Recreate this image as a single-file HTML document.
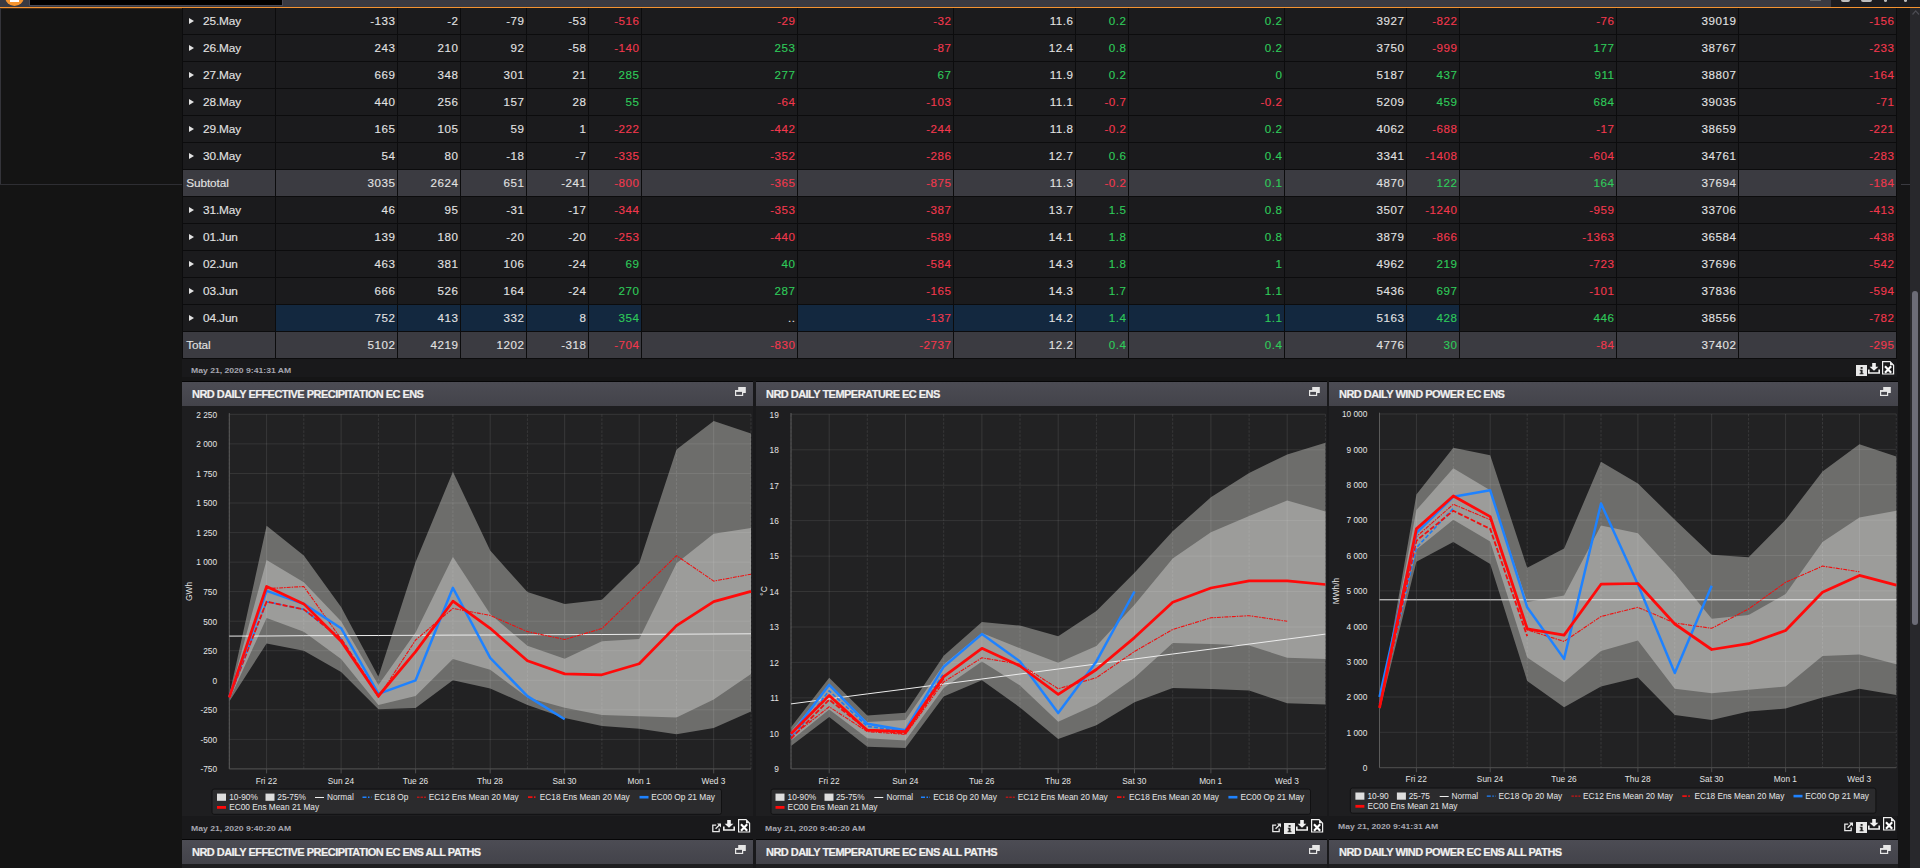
<!DOCTYPE html><html><head><meta charset="utf-8"><title>NRD</title><style>

html,body{margin:0;padding:0;background:#141414;}
body{width:1920px;height:868px;overflow:hidden;position:relative;font-family:"Liberation Sans",sans-serif;color:#dedede;}
.abs{position:absolute;}
.cell{position:absolute;height:26px;line-height:25px;font-size:11.6px;letter-spacing:.55px;text-align:right;box-sizing:border-box;padding-right:1.45px;white-space:nowrap;overflow:hidden;background:#1b1b1d;color:#e2e2e2;-webkit-text-stroke:.12px;}
.cell.lab{line-height:27px;text-align:left;padding-left:20px;letter-spacing:-.1px;font-size:11.8px;}
.cell.tot{background:#3b3b41;}
.cell.lab.tot{padding-left:3.2px;}
.cell.sel{background:#13283f;}
.r{color:#f2384d !important;}
.g{color:#2fcb5a !important;}
.tri{position:absolute;left:6px;top:9.6px;width:0;height:0;border-left:5px solid #e2e2e2;border-top:3px solid transparent;border-bottom:3px solid transparent;}
.ts{position:absolute;font-size:7px;font-weight:bold;letter-spacing:0;color:#a6a6b0;white-space:nowrap;line-height:10px;transform-origin:0 50%;transform:scaleX(1.23);}
.ptitle{position:absolute;height:24px;background:linear-gradient(#4c4c54,#43434a);}
.ptitle span{position:absolute;left:10px;top:0;line-height:25px;font-size:11px;font-weight:bold;color:#f0f0f0;white-space:nowrap;letter-spacing:-.53px;-webkit-text-stroke:.2px #f0f0f0;}
svg{position:absolute;left:0;top:0;}
svg text{font-family:"Liberation Sans",sans-serif;}

</style></head><body>
<div class="abs" style="left:0;top:0;width:1920px;height:7px;background:#3a3a42;"></div>
<div class="abs" style="left:29px;top:0;width:254px;height:6px;background:#4a4a55;"></div>
<div class="abs" style="left:30px;top:0;width:252px;height:5px;background:#000;"></div>
<div class="abs" style="left:5px;top:-13px;width:19px;height:19px;border-radius:50%;background:#f7952f;"></div>
<div class="abs" style="left:10px;top:0;width:9px;height:2px;background:#fff;"></div>
<div class="abs" style="left:1831px;top:0;width:89px;height:7px;background:#1c1c20;"></div>
<div class="abs" style="left:1810px;top:0;width:11px;height:1px;background:#6a6a6a;"></div>
<div class="abs" style="left:1841px;top:0;width:9px;height:2px;background:#bdbdbd;border-radius:0 0 2px 2px;"></div>
<div class="abs" style="left:1861px;top:0;width:11px;height:2px;background:#bdbdbd;border-radius:0 0 2px 2px;"></div>
<div class="abs" style="left:1884px;top:0;width:3px;height:2px;background:#bdbdbd;border-radius:0 0 2px 2px;"></div>
<div class="abs" style="left:1904px;top:0;width:3px;height:2px;background:#bdbdbd;border-radius:0 0 2px 2px;"></div>
<div class="abs" style="left:0;top:7px;width:1920px;height:1px;background:#f59331;"></div>
<div class="abs" style="left:0;top:8px;width:1920px;height:1px;background:rgba(245,147,49,.22);"></div>
<div class="abs" style="left:0;top:8px;width:1px;height:177px;background:#34343a;"></div>
<div class="abs" style="left:0;top:184px;width:1910px;height:1px;background:#2e2e33;"></div>
<div class="abs" style="left:182px;top:8px;width:1716px;height:860px;background:#19191b;"></div>
<div class="abs" style="left:1897px;top:8px;width:13px;height:860px;background:#151516;"></div>
<div class="abs" style="left:1901px;top:184px;width:9px;height:1px;background:#3a3a40;"></div>
<div class="abs" style="left:1909.5px;top:8px;width:10.5px;height:860px;background:#28282c;"></div>
<div class="abs" style="left:1912px;top:291px;width:6px;height:334px;border-radius:3px;background:#6c6c77;"></div>
<svg width="1920" height="30" style="left:0;top:0"><path d="M1912.5 14.5 L1915.7 10.8 L1919 14.5" fill="none" stroke="#4c4c53" stroke-width="1.2"/></svg>
<div class="abs" style="left:182px;top:8px;width:1715px;height:351px;background:#0c0c0d;"></div>
<div class="cell lab" style="left:183px;top:8px;width:92px"><i class="tri"></i>25.May</div>
<div class="cell" style="left:276px;top:8px;width:121px">-133</div>
<div class="cell" style="left:398px;top:8px;width:62px">-2</div>
<div class="cell" style="left:461px;top:8px;width:65px">-79</div>
<div class="cell" style="left:527px;top:8px;width:61px">-53</div>
<div class="cell r" style="left:589px;top:8px;width:52px">-516</div>
<div class="cell r" style="left:642px;top:8px;width:155px">-29</div>
<div class="cell r" style="left:798px;top:8px;width:155px">-32</div>
<div class="cell" style="left:954px;top:8px;width:121px">11.6</div>
<div class="cell g" style="left:1076px;top:8px;width:52px">0.2</div>
<div class="cell g" style="left:1129px;top:8px;width:155px">0.2</div>
<div class="cell" style="left:1285px;top:8px;width:121px">3927</div>
<div class="cell r" style="left:1407px;top:8px;width:52px">-822</div>
<div class="cell r" style="left:1460px;top:8px;width:156px">-76</div>
<div class="cell" style="left:1617px;top:8px;width:121px">39019</div>
<div class="cell r" style="left:1739px;top:8px;width:157px">-156</div>
<div class="cell lab" style="left:183px;top:35px;width:92px"><i class="tri"></i>26.May</div>
<div class="cell" style="left:276px;top:35px;width:121px">243</div>
<div class="cell" style="left:398px;top:35px;width:62px">210</div>
<div class="cell" style="left:461px;top:35px;width:65px">92</div>
<div class="cell" style="left:527px;top:35px;width:61px">-58</div>
<div class="cell r" style="left:589px;top:35px;width:52px">-140</div>
<div class="cell g" style="left:642px;top:35px;width:155px">253</div>
<div class="cell r" style="left:798px;top:35px;width:155px">-87</div>
<div class="cell" style="left:954px;top:35px;width:121px">12.4</div>
<div class="cell g" style="left:1076px;top:35px;width:52px">0.8</div>
<div class="cell g" style="left:1129px;top:35px;width:155px">0.2</div>
<div class="cell" style="left:1285px;top:35px;width:121px">3750</div>
<div class="cell r" style="left:1407px;top:35px;width:52px">-999</div>
<div class="cell g" style="left:1460px;top:35px;width:156px">177</div>
<div class="cell" style="left:1617px;top:35px;width:121px">38767</div>
<div class="cell r" style="left:1739px;top:35px;width:157px">-233</div>
<div class="cell lab" style="left:183px;top:62px;width:92px"><i class="tri"></i>27.May</div>
<div class="cell" style="left:276px;top:62px;width:121px">669</div>
<div class="cell" style="left:398px;top:62px;width:62px">348</div>
<div class="cell" style="left:461px;top:62px;width:65px">301</div>
<div class="cell" style="left:527px;top:62px;width:61px">21</div>
<div class="cell g" style="left:589px;top:62px;width:52px">285</div>
<div class="cell g" style="left:642px;top:62px;width:155px">277</div>
<div class="cell g" style="left:798px;top:62px;width:155px">67</div>
<div class="cell" style="left:954px;top:62px;width:121px">11.9</div>
<div class="cell g" style="left:1076px;top:62px;width:52px">0.2</div>
<div class="cell g" style="left:1129px;top:62px;width:155px">0</div>
<div class="cell" style="left:1285px;top:62px;width:121px">5187</div>
<div class="cell g" style="left:1407px;top:62px;width:52px">437</div>
<div class="cell g" style="left:1460px;top:62px;width:156px">911</div>
<div class="cell" style="left:1617px;top:62px;width:121px">38807</div>
<div class="cell r" style="left:1739px;top:62px;width:157px">-164</div>
<div class="cell lab" style="left:183px;top:89px;width:92px"><i class="tri"></i>28.May</div>
<div class="cell" style="left:276px;top:89px;width:121px">440</div>
<div class="cell" style="left:398px;top:89px;width:62px">256</div>
<div class="cell" style="left:461px;top:89px;width:65px">157</div>
<div class="cell" style="left:527px;top:89px;width:61px">28</div>
<div class="cell g" style="left:589px;top:89px;width:52px">55</div>
<div class="cell r" style="left:642px;top:89px;width:155px">-64</div>
<div class="cell r" style="left:798px;top:89px;width:155px">-103</div>
<div class="cell" style="left:954px;top:89px;width:121px">11.1</div>
<div class="cell r" style="left:1076px;top:89px;width:52px">-0.7</div>
<div class="cell r" style="left:1129px;top:89px;width:155px">-0.2</div>
<div class="cell" style="left:1285px;top:89px;width:121px">5209</div>
<div class="cell g" style="left:1407px;top:89px;width:52px">459</div>
<div class="cell g" style="left:1460px;top:89px;width:156px">684</div>
<div class="cell" style="left:1617px;top:89px;width:121px">39035</div>
<div class="cell r" style="left:1739px;top:89px;width:157px">-71</div>
<div class="cell lab" style="left:183px;top:116px;width:92px"><i class="tri"></i>29.May</div>
<div class="cell" style="left:276px;top:116px;width:121px">165</div>
<div class="cell" style="left:398px;top:116px;width:62px">105</div>
<div class="cell" style="left:461px;top:116px;width:65px">59</div>
<div class="cell" style="left:527px;top:116px;width:61px">1</div>
<div class="cell r" style="left:589px;top:116px;width:52px">-222</div>
<div class="cell r" style="left:642px;top:116px;width:155px">-442</div>
<div class="cell r" style="left:798px;top:116px;width:155px">-244</div>
<div class="cell" style="left:954px;top:116px;width:121px">11.8</div>
<div class="cell r" style="left:1076px;top:116px;width:52px">-0.2</div>
<div class="cell g" style="left:1129px;top:116px;width:155px">0.2</div>
<div class="cell" style="left:1285px;top:116px;width:121px">4062</div>
<div class="cell r" style="left:1407px;top:116px;width:52px">-688</div>
<div class="cell r" style="left:1460px;top:116px;width:156px">-17</div>
<div class="cell" style="left:1617px;top:116px;width:121px">38659</div>
<div class="cell r" style="left:1739px;top:116px;width:157px">-221</div>
<div class="cell lab" style="left:183px;top:143px;width:92px"><i class="tri"></i>30.May</div>
<div class="cell" style="left:276px;top:143px;width:121px">54</div>
<div class="cell" style="left:398px;top:143px;width:62px">80</div>
<div class="cell" style="left:461px;top:143px;width:65px">-18</div>
<div class="cell" style="left:527px;top:143px;width:61px">-7</div>
<div class="cell r" style="left:589px;top:143px;width:52px">-335</div>
<div class="cell r" style="left:642px;top:143px;width:155px">-352</div>
<div class="cell r" style="left:798px;top:143px;width:155px">-286</div>
<div class="cell" style="left:954px;top:143px;width:121px">12.7</div>
<div class="cell g" style="left:1076px;top:143px;width:52px">0.6</div>
<div class="cell g" style="left:1129px;top:143px;width:155px">0.4</div>
<div class="cell" style="left:1285px;top:143px;width:121px">3341</div>
<div class="cell r" style="left:1407px;top:143px;width:52px">-1408</div>
<div class="cell r" style="left:1460px;top:143px;width:156px">-604</div>
<div class="cell" style="left:1617px;top:143px;width:121px">34761</div>
<div class="cell r" style="left:1739px;top:143px;width:157px">-283</div>
<div class="cell lab tot" style="left:183px;top:170px;width:92px">Subtotal</div>
<div class="cell tot" style="left:276px;top:170px;width:121px">3035</div>
<div class="cell tot" style="left:398px;top:170px;width:62px">2624</div>
<div class="cell tot" style="left:461px;top:170px;width:65px">651</div>
<div class="cell tot" style="left:527px;top:170px;width:61px">-241</div>
<div class="cell tot r" style="left:589px;top:170px;width:52px">-800</div>
<div class="cell tot r" style="left:642px;top:170px;width:155px">-365</div>
<div class="cell tot r" style="left:798px;top:170px;width:155px">-875</div>
<div class="cell tot" style="left:954px;top:170px;width:121px">11.3</div>
<div class="cell tot r" style="left:1076px;top:170px;width:52px">-0.2</div>
<div class="cell tot g" style="left:1129px;top:170px;width:155px">0.1</div>
<div class="cell tot" style="left:1285px;top:170px;width:121px">4870</div>
<div class="cell tot g" style="left:1407px;top:170px;width:52px">122</div>
<div class="cell tot g" style="left:1460px;top:170px;width:156px">164</div>
<div class="cell tot" style="left:1617px;top:170px;width:121px">37694</div>
<div class="cell tot r" style="left:1739px;top:170px;width:157px">-184</div>
<div class="cell lab" style="left:183px;top:197px;width:92px"><i class="tri"></i>31.May</div>
<div class="cell" style="left:276px;top:197px;width:121px">46</div>
<div class="cell" style="left:398px;top:197px;width:62px">95</div>
<div class="cell" style="left:461px;top:197px;width:65px">-31</div>
<div class="cell" style="left:527px;top:197px;width:61px">-17</div>
<div class="cell r" style="left:589px;top:197px;width:52px">-344</div>
<div class="cell r" style="left:642px;top:197px;width:155px">-353</div>
<div class="cell r" style="left:798px;top:197px;width:155px">-387</div>
<div class="cell" style="left:954px;top:197px;width:121px">13.7</div>
<div class="cell g" style="left:1076px;top:197px;width:52px">1.5</div>
<div class="cell g" style="left:1129px;top:197px;width:155px">0.8</div>
<div class="cell" style="left:1285px;top:197px;width:121px">3507</div>
<div class="cell r" style="left:1407px;top:197px;width:52px">-1240</div>
<div class="cell r" style="left:1460px;top:197px;width:156px">-959</div>
<div class="cell" style="left:1617px;top:197px;width:121px">33706</div>
<div class="cell r" style="left:1739px;top:197px;width:157px">-413</div>
<div class="cell lab" style="left:183px;top:224px;width:92px"><i class="tri"></i>01.Jun</div>
<div class="cell" style="left:276px;top:224px;width:121px">139</div>
<div class="cell" style="left:398px;top:224px;width:62px">180</div>
<div class="cell" style="left:461px;top:224px;width:65px">-20</div>
<div class="cell" style="left:527px;top:224px;width:61px">-20</div>
<div class="cell r" style="left:589px;top:224px;width:52px">-253</div>
<div class="cell r" style="left:642px;top:224px;width:155px">-440</div>
<div class="cell r" style="left:798px;top:224px;width:155px">-589</div>
<div class="cell" style="left:954px;top:224px;width:121px">14.1</div>
<div class="cell g" style="left:1076px;top:224px;width:52px">1.8</div>
<div class="cell g" style="left:1129px;top:224px;width:155px">0.8</div>
<div class="cell" style="left:1285px;top:224px;width:121px">3879</div>
<div class="cell r" style="left:1407px;top:224px;width:52px">-866</div>
<div class="cell r" style="left:1460px;top:224px;width:156px">-1363</div>
<div class="cell" style="left:1617px;top:224px;width:121px">36584</div>
<div class="cell r" style="left:1739px;top:224px;width:157px">-438</div>
<div class="cell lab" style="left:183px;top:251px;width:92px"><i class="tri"></i>02.Jun</div>
<div class="cell" style="left:276px;top:251px;width:121px">463</div>
<div class="cell" style="left:398px;top:251px;width:62px">381</div>
<div class="cell" style="left:461px;top:251px;width:65px">106</div>
<div class="cell" style="left:527px;top:251px;width:61px">-24</div>
<div class="cell g" style="left:589px;top:251px;width:52px">69</div>
<div class="cell g" style="left:642px;top:251px;width:155px">40</div>
<div class="cell r" style="left:798px;top:251px;width:155px">-584</div>
<div class="cell" style="left:954px;top:251px;width:121px">14.3</div>
<div class="cell g" style="left:1076px;top:251px;width:52px">1.8</div>
<div class="cell g" style="left:1129px;top:251px;width:155px">1</div>
<div class="cell" style="left:1285px;top:251px;width:121px">4962</div>
<div class="cell g" style="left:1407px;top:251px;width:52px">219</div>
<div class="cell r" style="left:1460px;top:251px;width:156px">-723</div>
<div class="cell" style="left:1617px;top:251px;width:121px">37696</div>
<div class="cell r" style="left:1739px;top:251px;width:157px">-542</div>
<div class="cell lab" style="left:183px;top:278px;width:92px"><i class="tri"></i>03.Jun</div>
<div class="cell" style="left:276px;top:278px;width:121px">666</div>
<div class="cell" style="left:398px;top:278px;width:62px">526</div>
<div class="cell" style="left:461px;top:278px;width:65px">164</div>
<div class="cell" style="left:527px;top:278px;width:61px">-24</div>
<div class="cell g" style="left:589px;top:278px;width:52px">270</div>
<div class="cell g" style="left:642px;top:278px;width:155px">287</div>
<div class="cell r" style="left:798px;top:278px;width:155px">-165</div>
<div class="cell" style="left:954px;top:278px;width:121px">14.3</div>
<div class="cell g" style="left:1076px;top:278px;width:52px">1.7</div>
<div class="cell g" style="left:1129px;top:278px;width:155px">1.1</div>
<div class="cell" style="left:1285px;top:278px;width:121px">5436</div>
<div class="cell g" style="left:1407px;top:278px;width:52px">697</div>
<div class="cell r" style="left:1460px;top:278px;width:156px">-101</div>
<div class="cell" style="left:1617px;top:278px;width:121px">37836</div>
<div class="cell r" style="left:1739px;top:278px;width:157px">-594</div>
<div class="cell lab" style="left:183px;top:305px;width:92px"><i class="tri"></i>04.Jun</div>
<div class="cell sel" style="left:276px;top:305px;width:121px">752</div>
<div class="cell sel" style="left:398px;top:305px;width:62px">413</div>
<div class="cell sel" style="left:461px;top:305px;width:65px">332</div>
<div class="cell sel" style="left:527px;top:305px;width:61px">8</div>
<div class="cell sel g" style="left:589px;top:305px;width:52px">354</div>
<div class="cell" style="left:642px;top:305px;width:155px">..</div>
<div class="cell sel r" style="left:798px;top:305px;width:155px">-137</div>
<div class="cell sel" style="left:954px;top:305px;width:121px">14.2</div>
<div class="cell sel g" style="left:1076px;top:305px;width:52px">1.4</div>
<div class="cell sel g" style="left:1129px;top:305px;width:155px">1.1</div>
<div class="cell sel" style="left:1285px;top:305px;width:121px">5163</div>
<div class="cell sel g" style="left:1407px;top:305px;width:52px">428</div>
<div class="cell g" style="left:1460px;top:305px;width:156px">446</div>
<div class="cell" style="left:1617px;top:305px;width:121px">38556</div>
<div class="cell r" style="left:1739px;top:305px;width:157px">-782</div>
<div class="cell lab tot" style="left:183px;top:332px;width:92px">Total</div>
<div class="cell tot" style="left:276px;top:332px;width:121px">5102</div>
<div class="cell tot" style="left:398px;top:332px;width:62px">4219</div>
<div class="cell tot" style="left:461px;top:332px;width:65px">1202</div>
<div class="cell tot" style="left:527px;top:332px;width:61px">-318</div>
<div class="cell tot r" style="left:589px;top:332px;width:52px">-704</div>
<div class="cell tot r" style="left:642px;top:332px;width:155px">-830</div>
<div class="cell tot r" style="left:798px;top:332px;width:155px">-2737</div>
<div class="cell tot" style="left:954px;top:332px;width:121px">12.2</div>
<div class="cell tot g" style="left:1076px;top:332px;width:52px">0.4</div>
<div class="cell tot g" style="left:1129px;top:332px;width:155px">0.4</div>
<div class="cell tot" style="left:1285px;top:332px;width:121px">4776</div>
<div class="cell tot g" style="left:1407px;top:332px;width:52px">30</div>
<div class="cell tot r" style="left:1460px;top:332px;width:156px">-84</div>
<div class="cell tot" style="left:1617px;top:332px;width:121px">37402</div>
<div class="cell tot r" style="left:1739px;top:332px;width:157px">-295</div>
<div class="ts" style="left:190.5px;top:365.5px">May 21, 2020 9:41:31 AM</div>
<svg width="11" height="11" style="left:1855.5px;top:364.5px;overflow:visible"><rect x="0" y="0" width="11" height="11" fill="#e8e8e8"/><rect x="4.6" y="2" width="2" height="1.8" fill="#222"/><path d="M3.8 4.8 H6.6 V8.3 H7.5 V9.3 H3.6 V8.3 H4.6 V5.8 H3.8 Z" fill="#222"/></svg>
<svg width="12" height="12" style="left:1867.5px;top:362.5px;overflow:visible"><path d="M4.2 0 H7.8 V3.8 H10.4 L6 7.8 L1.6 3.8 H4.2 Z" fill="#f0f0f0"/><path d="M0 6.4 H1.6 V9.2 H10.4 V6.4 H12 V10.8 H0 Z" fill="#f0f0f0"/></svg>
<svg width="12" height="14" style="left:1882.2px;top:361.3px;overflow:visible"><path d="M0.6 0.6 H8 L11.6 4.2 V13 H0.6 Z" fill="none" stroke="#f0f0f0" stroke-width="1.2"/><path d="M8 0.6 V4.2 H11.6 Z" fill="#f0f0f0" stroke="none"/><path d="M3 5.2 L9.2 11.8 M9.2 5.2 L3 11.8" stroke="#ffffff" stroke-width="2.1" fill="none"/></svg>
<div class="abs" style="left:182px;top:377px;width:1716px;height:4px;background:#151516;"></div>
<div class="abs" style="left:182px;top:381px;width:571px;height:1px;background:#060607;"></div>
<div class="ptitle" style="left:182px;top:382px;width:571px"><span>NRD DAILY EFFECTIVE PRECIPITATION EC ENS</span></div>
<svg width="11" height="9" style="left:735.1px;top:387px;overflow:visible"><rect x="3.2" y="0" width="7.6" height="6" fill="#e6e6e6"/><rect x="0.6" y="3.8" width="7" height="4.6" fill="#45454c" stroke="#e6e6e6" stroke-width="1.2"/><rect x="0" y="3.2" width="8.2" height="1.6" fill="#e6e6e6"/></svg>
<div class="abs" style="left:182px;top:406px;width:571px;height:410px;background:#1e1e20;"></div>
<div class="ts" style="left:190.7px;top:823.5px">May 21, 2020 9:40:20 AM</div>
<div class="abs" style="left:182px;top:839px;width:571px;height:1px;background:#060607;"></div>
<div class="ptitle" style="left:182px;top:840px;width:571px"><span>NRD DAILY EFFECTIVE PRECIPITATION EC ENS ALL PATHS</span></div>
<svg width="11" height="9" style="left:735.1px;top:845px;overflow:visible"><rect x="3.2" y="0" width="7.6" height="6" fill="#e6e6e6"/><rect x="0.6" y="3.8" width="7" height="4.6" fill="#45454c" stroke="#e6e6e6" stroke-width="1.2"/><rect x="0" y="3.2" width="8.2" height="1.6" fill="#e6e6e6"/></svg>
<div class="abs" style="left:182px;top:864px;width:571px;height:4px;background:#1e1e20;"></div>
<svg width="12" height="14" style="left:737.7px;top:818.6px;overflow:visible"><path d="M0.6 0.6 H8 L11.6 4.2 V13 H0.6 Z" fill="none" stroke="#f0f0f0" stroke-width="1.2"/><path d="M8 0.6 V4.2 H11.6 Z" fill="#f0f0f0" stroke="none"/><path d="M3 5.2 L9.2 11.8 M9.2 5.2 L3 11.8" stroke="#ffffff" stroke-width="2.1" fill="none"/></svg>
<svg width="12" height="12" style="left:722.9000000000001px;top:819.9px;overflow:visible"><path d="M4.2 0 H7.8 V3.8 H10.4 L6 7.8 L1.6 3.8 H4.2 Z" fill="#f0f0f0"/><path d="M0 6.4 H1.6 V9.2 H10.4 V6.4 H12 V10.8 H0 Z" fill="#f0f0f0"/></svg>
<svg width="9" height="9" style="left:711.7px;top:823.0px;overflow:visible"><g fill="none" stroke="#e8e8e8" stroke-width="1.3"><path d="M4.2 2.2 H0.8 V8.6 H7.2 V5.4"/><path d="M3.6 5.8 L8.2 1.2"/></g><path d="M5 0.4 H9 V4.4 Z" fill="#e8e8e8"/></svg>
<div class="abs" style="left:756px;top:381px;width:571px;height:1px;background:#060607;"></div>
<div class="ptitle" style="left:756px;top:382px;width:571px"><span>NRD DAILY TEMPERATURE EC ENS</span></div>
<svg width="11" height="9" style="left:1309.1px;top:387px;overflow:visible"><rect x="3.2" y="0" width="7.6" height="6" fill="#e6e6e6"/><rect x="0.6" y="3.8" width="7" height="4.6" fill="#45454c" stroke="#e6e6e6" stroke-width="1.2"/><rect x="0" y="3.2" width="8.2" height="1.6" fill="#e6e6e6"/></svg>
<div class="abs" style="left:756px;top:406px;width:571px;height:410px;background:#1e1e20;"></div>
<div class="ts" style="left:764.7px;top:823.5px">May 21, 2020 9:40:20 AM</div>
<div class="abs" style="left:756px;top:839px;width:571px;height:1px;background:#060607;"></div>
<div class="ptitle" style="left:756px;top:840px;width:571px"><span>NRD DAILY TEMPERATURE EC ENS ALL PATHS</span></div>
<svg width="11" height="9" style="left:1309.1px;top:845px;overflow:visible"><rect x="3.2" y="0" width="7.6" height="6" fill="#e6e6e6"/><rect x="0.6" y="3.8" width="7" height="4.6" fill="#45454c" stroke="#e6e6e6" stroke-width="1.2"/><rect x="0" y="3.2" width="8.2" height="1.6" fill="#e6e6e6"/></svg>
<div class="abs" style="left:756px;top:864px;width:571px;height:4px;background:#1e1e20;"></div>
<svg width="12" height="14" style="left:1310.6px;top:818.6px;overflow:visible"><path d="M0.6 0.6 H8 L11.6 4.2 V13 H0.6 Z" fill="none" stroke="#f0f0f0" stroke-width="1.2"/><path d="M8 0.6 V4.2 H11.6 Z" fill="#f0f0f0" stroke="none"/><path d="M3 5.2 L9.2 11.8 M9.2 5.2 L3 11.8" stroke="#ffffff" stroke-width="2.1" fill="none"/></svg>
<svg width="12" height="12" style="left:1295.8px;top:819.9px;overflow:visible"><path d="M4.2 0 H7.8 V3.8 H10.4 L6 7.8 L1.6 3.8 H4.2 Z" fill="#f0f0f0"/><path d="M0 6.4 H1.6 V9.2 H10.4 V6.4 H12 V10.8 H0 Z" fill="#f0f0f0"/></svg>
<svg width="11" height="11" style="left:1283.6999999999998px;top:823.0px;overflow:visible"><rect x="0" y="0" width="11" height="11" fill="#e8e8e8"/><rect x="4.6" y="2" width="2" height="1.8" fill="#222"/><path d="M3.8 4.8 H6.6 V8.3 H7.5 V9.3 H3.6 V8.3 H4.6 V5.8 H3.8 Z" fill="#222"/></svg>
<svg width="9" height="9" style="left:1272.3px;top:823.0px;overflow:visible"><g fill="none" stroke="#e8e8e8" stroke-width="1.3"><path d="M4.2 2.2 H0.8 V8.6 H7.2 V5.4"/><path d="M3.6 5.8 L8.2 1.2"/></g><path d="M5 0.4 H9 V4.4 Z" fill="#e8e8e8"/></svg>
<div class="abs" style="left:1329px;top:381px;width:569px;height:1px;background:#060607;"></div>
<div class="ptitle" style="left:1329px;top:382px;width:569px"><span>NRD DAILY WIND POWER EC ENS</span></div>
<svg width="11" height="9" style="left:1880.1px;top:387px;overflow:visible"><rect x="3.2" y="0" width="7.6" height="6" fill="#e6e6e6"/><rect x="0.6" y="3.8" width="7" height="4.6" fill="#45454c" stroke="#e6e6e6" stroke-width="1.2"/><rect x="0" y="3.2" width="8.2" height="1.6" fill="#e6e6e6"/></svg>
<div class="abs" style="left:1329px;top:406px;width:569px;height:410px;background:#1e1e20;"></div>
<div class="ts" style="left:1337.7px;top:821.5px">May 21, 2020 9:41:31 AM</div>
<div class="abs" style="left:1329px;top:839px;width:569px;height:1px;background:#060607;"></div>
<div class="ptitle" style="left:1329px;top:840px;width:569px"><span>NRD DAILY WIND POWER EC ENS ALL PATHS</span></div>
<svg width="11" height="9" style="left:1880.1px;top:845px;overflow:visible"><rect x="3.2" y="0" width="7.6" height="6" fill="#e6e6e6"/><rect x="0.6" y="3.8" width="7" height="4.6" fill="#45454c" stroke="#e6e6e6" stroke-width="1.2"/><rect x="0" y="3.2" width="8.2" height="1.6" fill="#e6e6e6"/></svg>
<div class="abs" style="left:1329px;top:864px;width:569px;height:4px;background:#1e1e20;"></div>
<svg width="12" height="14" style="left:1882.5px;top:817.4px;overflow:visible"><path d="M0.6 0.6 H8 L11.6 4.2 V13 H0.6 Z" fill="none" stroke="#f0f0f0" stroke-width="1.2"/><path d="M8 0.6 V4.2 H11.6 Z" fill="#f0f0f0" stroke="none"/><path d="M3 5.2 L9.2 11.8 M9.2 5.2 L3 11.8" stroke="#ffffff" stroke-width="2.1" fill="none"/></svg>
<svg width="12" height="12" style="left:1867.7px;top:818.6999999999999px;overflow:visible"><path d="M4.2 0 H7.8 V3.8 H10.4 L6 7.8 L1.6 3.8 H4.2 Z" fill="#f0f0f0"/><path d="M0 6.4 H1.6 V9.2 H10.4 V6.4 H12 V10.8 H0 Z" fill="#f0f0f0"/></svg>
<svg width="11" height="11" style="left:1855.6px;top:821.8px;overflow:visible"><rect x="0" y="0" width="11" height="11" fill="#e8e8e8"/><rect x="4.6" y="2" width="2" height="1.8" fill="#222"/><path d="M3.8 4.8 H6.6 V8.3 H7.5 V9.3 H3.6 V8.3 H4.6 V5.8 H3.8 Z" fill="#222"/></svg>
<svg width="9" height="9" style="left:1844.2px;top:821.8px;overflow:visible"><g fill="none" stroke="#e8e8e8" stroke-width="1.3"><path d="M4.2 2.2 H0.8 V8.6 H7.2 V5.4"/><path d="M3.6 5.8 L8.2 1.2"/></g><path d="M5 0.4 H9 V4.4 Z" fill="#e8e8e8"/></svg>
<svg width="1920" height="868" viewBox="0 0 1920 868"><rect x="229.3" y="413.09999999999997" width="521.7" height="355.8" fill="#222223"/><polygon points="229.3,695.0 266.6,525.8 303.8,555.6 341.1,607.0 378.4,676.7 415.6,562.1 452.9,471.7 490.2,550.5 527.4,592.1 564.7,603.9 601.9,599.7 639.2,563.3 676.5,449.5 713.7,421.0 751.0,433.4 751.0,711.5 713.7,728.1 676.5,734.3 639.2,728.8 601.9,725.9 564.7,718.0 527.4,704.9 490.2,688.5 452.9,680.3 415.6,708.0 378.4,709.2 341.1,672.0 303.8,650.7 266.6,643.4 229.3,701.5" fill="#6d6d6b"/><polygon points="229.3,696.8 266.6,560.1 303.8,582.2 341.1,621.2 378.4,685.0 415.6,632.5 452.9,556.7 490.2,614.1 527.4,645.8 564.7,658.8 601.9,641.3 639.2,639.0 676.5,563.3 713.7,533.7 751.0,528.1 751.0,674.1 713.7,699.5 676.5,717.5 639.2,716.2 601.9,714.9 564.7,707.8 527.4,697.4 490.2,669.8 452.9,659.0 415.6,696.1 378.4,704.9 341.1,659.0 303.8,631.8 266.6,618.0 229.3,700.1" fill="#9c9c9a"/><line x1="229.3" x2="751" y1="414.4" y2="414.4" stroke="rgba(255,255,255,.085)" stroke-width="1"/><line x1="229.3" x2="751" y1="443.9" y2="443.9" stroke="rgba(255,255,255,.085)" stroke-width="1"/><line x1="229.3" x2="751" y1="473.5" y2="473.5" stroke="rgba(255,255,255,.085)" stroke-width="1"/><line x1="229.3" x2="751" y1="503.0" y2="503.0" stroke="rgba(255,255,255,.085)" stroke-width="1"/><line x1="229.3" x2="751" y1="532.6" y2="532.6" stroke="rgba(255,255,255,.085)" stroke-width="1"/><line x1="229.3" x2="751" y1="562.1" y2="562.1" stroke="rgba(255,255,255,.085)" stroke-width="1"/><line x1="229.3" x2="751" y1="591.6" y2="591.6" stroke="rgba(255,255,255,.085)" stroke-width="1"/><line x1="229.3" x2="751" y1="621.2" y2="621.2" stroke="rgba(255,255,255,.085)" stroke-width="1"/><line x1="229.3" x2="751" y1="650.7" y2="650.7" stroke="rgba(255,255,255,.085)" stroke-width="1"/><line x1="229.3" x2="751" y1="680.3" y2="680.3" stroke="rgba(255,255,255,.085)" stroke-width="1"/><line x1="229.3" x2="751" y1="709.8" y2="709.8" stroke="rgba(255,255,255,.085)" stroke-width="1"/><line x1="229.3" x2="751" y1="739.4" y2="739.4" stroke="rgba(255,255,255,.085)" stroke-width="1"/><line x1="229.3" x2="751" y1="768.9" y2="768.9" stroke="rgba(255,255,255,.085)" stroke-width="1"/><line x1="229.3" x2="229.3" y1="414.4" y2="768.9" stroke="rgba(255,255,255,.10)" stroke-width="1" stroke-dasharray="2.5,1.5"/><line x1="266.6" x2="266.6" y1="414.4" y2="768.9" stroke="rgba(255,255,255,.10)" stroke-width="1"/><line x1="303.8" x2="303.8" y1="414.4" y2="768.9" stroke="rgba(255,255,255,.10)" stroke-width="1" stroke-dasharray="2.5,1.5"/><line x1="341.1" x2="341.1" y1="414.4" y2="768.9" stroke="rgba(255,255,255,.10)" stroke-width="1"/><line x1="378.4" x2="378.4" y1="414.4" y2="768.9" stroke="rgba(255,255,255,.10)" stroke-width="1" stroke-dasharray="2.5,1.5"/><line x1="415.6" x2="415.6" y1="414.4" y2="768.9" stroke="rgba(255,255,255,.10)" stroke-width="1"/><line x1="452.9" x2="452.9" y1="414.4" y2="768.9" stroke="rgba(255,255,255,.10)" stroke-width="1" stroke-dasharray="2.5,1.5"/><line x1="490.2" x2="490.2" y1="414.4" y2="768.9" stroke="rgba(255,255,255,.10)" stroke-width="1"/><line x1="527.4" x2="527.4" y1="414.4" y2="768.9" stroke="rgba(255,255,255,.10)" stroke-width="1" stroke-dasharray="2.5,1.5"/><line x1="564.7" x2="564.7" y1="414.4" y2="768.9" stroke="rgba(255,255,255,.10)" stroke-width="1"/><line x1="601.9" x2="601.9" y1="414.4" y2="768.9" stroke="rgba(255,255,255,.10)" stroke-width="1" stroke-dasharray="2.5,1.5"/><line x1="639.2" x2="639.2" y1="414.4" y2="768.9" stroke="rgba(255,255,255,.10)" stroke-width="1"/><line x1="676.5" x2="676.5" y1="414.4" y2="768.9" stroke="rgba(255,255,255,.10)" stroke-width="1" stroke-dasharray="2.5,1.5"/><line x1="713.7" x2="713.7" y1="414.4" y2="768.9" stroke="rgba(255,255,255,.10)" stroke-width="1"/><line x1="751.0" x2="751.0" y1="414.4" y2="768.9" stroke="rgba(255,255,255,.10)" stroke-width="1" stroke-dasharray="2.5,1.5"/><line x1="229.3" x2="229.3" y1="413.09999999999997" y2="768.9" stroke="#5a5a5a" stroke-width="1"/><line x1="229.3" x2="751" y1="768.9" y2="768.9" stroke="#4e4e4e" stroke-width="1"/><line x1="266.6" x2="266.6" y1="768.9" y2="773.4" stroke="#4e4e4e" stroke-width="1"/><line x1="341.1" x2="341.1" y1="768.9" y2="773.4" stroke="#4e4e4e" stroke-width="1"/><line x1="415.6" x2="415.6" y1="768.9" y2="773.4" stroke="#4e4e4e" stroke-width="1"/><line x1="490.2" x2="490.2" y1="768.9" y2="773.4" stroke="#4e4e4e" stroke-width="1"/><line x1="564.7" x2="564.7" y1="768.9" y2="773.4" stroke="#4e4e4e" stroke-width="1"/><line x1="639.2" x2="639.2" y1="768.9" y2="773.4" stroke="#4e4e4e" stroke-width="1"/><line x1="713.7" x2="713.7" y1="768.9" y2="773.4" stroke="#4e4e4e" stroke-width="1"/><polyline points="229.3,636.1 266.6,636.0 303.8,635.7 341.1,635.6 378.4,635.5 415.6,635.3 452.9,635.1 490.2,635.0 527.4,634.8 564.7,634.7 601.9,634.5 639.2,634.3 676.5,634.2 713.7,634.0 751.0,633.8" fill="none" stroke="#ececec" stroke-width="1.0" stroke-linejoin="round" stroke-opacity="1"/><polyline points="229.3,697.4 266.6,588.7 303.8,586.5 341.1,638.9 378.4,697.4 415.6,640.0 452.9,608.4 490.2,615.4 527.4,631.6 564.7,639.5 601.9,628.5 639.2,592.1 676.5,555.6 713.7,581.1 751.0,574.2" fill="none" stroke="#f01010" stroke-width="1.1" stroke-linejoin="round" stroke-opacity="1" stroke-dasharray="4,1,1.5,1"/><polyline points="229.3,697.4 266.6,601.7 303.8,609.4 341.1,638.9 378.4,695.6" fill="none" stroke="#1e7cf0" stroke-width="1.6" stroke-linejoin="round" stroke-opacity="1" stroke-dasharray="4,2"/><polyline points="229.3,697.4 266.6,601.7 303.8,609.4 341.1,638.9 378.4,695.6" fill="none" stroke="#f01010" stroke-width="1.8" stroke-linejoin="round" stroke-opacity="1" stroke-dasharray="5,2"/><polyline points="229.3,696.8 266.6,590.8 303.8,603.9 341.1,628.2 378.4,693.9 415.6,680.3 452.9,587.8 490.2,657.8 527.4,696.1 564.7,719.3" fill="none" stroke="#1e82ff" stroke-width="2.45" stroke-linejoin="round" stroke-opacity="1"/><polyline points="229.3,697.4 266.6,586.5 303.8,603.9 341.1,641.3 378.4,696.0 415.6,651.6 452.9,601.2 490.2,628.3 527.4,660.8 564.7,673.9 601.9,674.8 639.2,663.8 676.5,625.6 713.7,601.6 751.0,591.4" fill="none" stroke="#ff0a0a" stroke-width="2.75" stroke-linejoin="round" stroke-opacity="1"/><text x="217.10000000000002" y="417.7" font-size="8.3" fill="#e4e4e4" text-anchor="end">2 250</text><text x="217.10000000000002" y="447.2" font-size="8.3" fill="#e4e4e4" text-anchor="end">2 000</text><text x="217.10000000000002" y="476.8" font-size="8.3" fill="#e4e4e4" text-anchor="end">1 750</text><text x="217.10000000000002" y="506.3" font-size="8.3" fill="#e4e4e4" text-anchor="end">1 500</text><text x="217.10000000000002" y="535.9" font-size="8.3" fill="#e4e4e4" text-anchor="end">1 250</text><text x="217.10000000000002" y="565.4" font-size="8.3" fill="#e4e4e4" text-anchor="end">1 000</text><text x="217.10000000000002" y="594.9" font-size="8.3" fill="#e4e4e4" text-anchor="end">750</text><text x="217.10000000000002" y="624.5" font-size="8.3" fill="#e4e4e4" text-anchor="end">500</text><text x="217.10000000000002" y="654.0" font-size="8.3" fill="#e4e4e4" text-anchor="end">250</text><text x="217.10000000000002" y="683.6" font-size="8.3" fill="#e4e4e4" text-anchor="end">0</text><text x="217.10000000000002" y="713.1" font-size="8.3" fill="#e4e4e4" text-anchor="end">-250</text><text x="217.10000000000002" y="742.7" font-size="8.3" fill="#e4e4e4" text-anchor="end">-500</text><text x="217.10000000000002" y="772.2" font-size="8.3" fill="#e4e4e4" text-anchor="end">-750</text><text transform="translate(192.3,591.5) rotate(-90)" font-size="8.4" fill="#e4e4e4" text-anchor="middle">GWh</text><text x="266.4" y="784" font-size="8.3" fill="#e4e4e4" text-anchor="middle">Fri 22</text><text x="340.9" y="784" font-size="8.3" fill="#e4e4e4" text-anchor="middle">Sun 24</text><text x="415.4" y="784" font-size="8.3" fill="#e4e4e4" text-anchor="middle">Tue 26</text><text x="490.0" y="784" font-size="8.3" fill="#e4e4e4" text-anchor="middle">Thu 28</text><text x="564.5" y="784" font-size="8.3" fill="#e4e4e4" text-anchor="middle">Sat 30</text><text x="639.0" y="784" font-size="8.3" fill="#e4e4e4" text-anchor="middle">Mon 1</text><text x="713.5" y="784" font-size="8.3" fill="#e4e4e4" text-anchor="middle">Wed 3</text><rect x="212" y="789.1" width="509.5" height="25.2" rx="2" fill="#2b2b2d" stroke="#111112" stroke-width="1"/><rect x="217" y="793.6" width="9" height="7.2" fill="#dedede"/><text x="229.2" y="800.0" font-size="8.3" fill="#e6e6e6">10-90%</text><rect x="265.5" y="793.6" width="9" height="7.2" fill="#dedede"/><text x="277.3" y="800.0" font-size="8.3" fill="#e6e6e6">25-75%</text><line x1="315" x2="324" y1="797.5" y2="797.5" stroke="#eee" stroke-width="1"/><text x="327" y="800.0" font-size="8.3" fill="#e6e6e6">Normal</text><line x1="362.5" x2="371.5" y1="797.2" y2="797.2" stroke="#1e82ff" stroke-width="1.4" stroke-dasharray="4,1.5,1.5,1.5"/><text x="374.3" y="800.0" font-size="8.3" fill="#e6e6e6">EC18 Op</text><line x1="417" x2="426" y1="797.2" y2="797.2" stroke="#f01010" stroke-width="1" stroke-dasharray="2.5,1"/><text x="428.8" y="800.0" font-size="8.3" fill="#e6e6e6">EC12 Ens Mean 20 May</text><line x1="528" x2="537" y1="797.2" y2="797.2" stroke="#f01010" stroke-width="1.8" stroke-dasharray="4.5,1.5,1.5,1.5"/><text x="539.8" y="800.0" font-size="8.3" fill="#e6e6e6">EC18 Ens Mean 20 May</text><line x1="639.5" x2="648.5" y1="797.2" y2="797.2" stroke="#1e82ff" stroke-width="2.6"/><text x="651.3" y="800.0" font-size="8.3" fill="#e6e6e6">EC00 Op 21 May</text><line x1="217" x2="226" y1="807.4" y2="807.4" stroke="#ff0a0a" stroke-width="2.8"/><text x="229.2" y="810.2" font-size="8.3" fill="#e6e6e6">EC00 Ens Mean 21 May</text><rect x="791" y="413.0" width="534.4000000000001" height="355.79999999999995" fill="#222223"/><polygon points="791.0,727.3 829.2,677.7 867.3,715.6 905.5,712.8 943.7,655.7 981.9,622.0 1020.0,625.6 1058.2,636.2 1096.4,611.0 1134.5,572.8 1172.7,531.3 1210.9,497.3 1249.1,473.1 1287.2,454.4 1325.4,442.7 1325.4,704.6 1287.2,703.2 1249.1,690.5 1210.9,689.0 1172.7,688.0 1134.5,702.2 1096.4,725.2 1058.2,739.0 1020.0,707.5 981.9,680.2 943.7,696.5 905.5,747.9 867.3,746.8 829.2,717.0 791.0,746.1" fill="#6d6d6b"/><polygon points="791.0,731.6 829.2,685.5 867.3,722.0 905.5,719.9 943.7,664.6 981.9,633.0 1020.0,648.3 1058.2,662.8 1096.4,646.1 1134.5,604.7 1172.7,558.6 1210.9,532.3 1249.1,516.0 1287.2,500.4 1325.4,511.4 1325.4,658.9 1287.2,657.8 1249.1,645.4 1210.9,644.0 1172.7,643.0 1134.5,677.7 1096.4,704.6 1058.2,721.7 1020.0,685.5 981.9,661.4 943.7,688.0 905.5,740.4 867.3,738.3 829.2,709.6 791.0,740.4" fill="#9c9c9a"/><line x1="791" x2="1325.4" y1="414.3" y2="414.3" stroke="rgba(255,255,255,.085)" stroke-width="1"/><line x1="791" x2="1325.4" y1="449.8" y2="449.8" stroke="rgba(255,255,255,.085)" stroke-width="1"/><line x1="791" x2="1325.4" y1="485.2" y2="485.2" stroke="rgba(255,255,255,.085)" stroke-width="1"/><line x1="791" x2="1325.4" y1="520.6" y2="520.6" stroke="rgba(255,255,255,.085)" stroke-width="1"/><line x1="791" x2="1325.4" y1="556.1" y2="556.1" stroke="rgba(255,255,255,.085)" stroke-width="1"/><line x1="791" x2="1325.4" y1="591.5" y2="591.5" stroke="rgba(255,255,255,.085)" stroke-width="1"/><line x1="791" x2="1325.4" y1="627.0" y2="627.0" stroke="rgba(255,255,255,.085)" stroke-width="1"/><line x1="791" x2="1325.4" y1="662.4" y2="662.4" stroke="rgba(255,255,255,.085)" stroke-width="1"/><line x1="791" x2="1325.4" y1="697.9" y2="697.9" stroke="rgba(255,255,255,.085)" stroke-width="1"/><line x1="791" x2="1325.4" y1="733.3" y2="733.3" stroke="rgba(255,255,255,.085)" stroke-width="1"/><line x1="791" x2="1325.4" y1="768.8" y2="768.8" stroke="rgba(255,255,255,.085)" stroke-width="1"/><line x1="791.0" x2="791.0" y1="414.3" y2="768.8" stroke="rgba(255,255,255,.10)" stroke-width="1" stroke-dasharray="2.5,1.5"/><line x1="829.2" x2="829.2" y1="414.3" y2="768.8" stroke="rgba(255,255,255,.10)" stroke-width="1"/><line x1="867.3" x2="867.3" y1="414.3" y2="768.8" stroke="rgba(255,255,255,.10)" stroke-width="1" stroke-dasharray="2.5,1.5"/><line x1="905.5" x2="905.5" y1="414.3" y2="768.8" stroke="rgba(255,255,255,.10)" stroke-width="1"/><line x1="943.7" x2="943.7" y1="414.3" y2="768.8" stroke="rgba(255,255,255,.10)" stroke-width="1" stroke-dasharray="2.5,1.5"/><line x1="981.9" x2="981.9" y1="414.3" y2="768.8" stroke="rgba(255,255,255,.10)" stroke-width="1"/><line x1="1020.0" x2="1020.0" y1="414.3" y2="768.8" stroke="rgba(255,255,255,.10)" stroke-width="1" stroke-dasharray="2.5,1.5"/><line x1="1058.2" x2="1058.2" y1="414.3" y2="768.8" stroke="rgba(255,255,255,.10)" stroke-width="1"/><line x1="1096.4" x2="1096.4" y1="414.3" y2="768.8" stroke="rgba(255,255,255,.10)" stroke-width="1" stroke-dasharray="2.5,1.5"/><line x1="1134.5" x2="1134.5" y1="414.3" y2="768.8" stroke="rgba(255,255,255,.10)" stroke-width="1"/><line x1="1172.7" x2="1172.7" y1="414.3" y2="768.8" stroke="rgba(255,255,255,.10)" stroke-width="1" stroke-dasharray="2.5,1.5"/><line x1="1210.9" x2="1210.9" y1="414.3" y2="768.8" stroke="rgba(255,255,255,.10)" stroke-width="1"/><line x1="1249.1" x2="1249.1" y1="414.3" y2="768.8" stroke="rgba(255,255,255,.10)" stroke-width="1" stroke-dasharray="2.5,1.5"/><line x1="1287.2" x2="1287.2" y1="414.3" y2="768.8" stroke="rgba(255,255,255,.10)" stroke-width="1"/><line x1="1325.4" x2="1325.4" y1="414.3" y2="768.8" stroke="rgba(255,255,255,.10)" stroke-width="1" stroke-dasharray="2.5,1.5"/><line x1="791" x2="791" y1="413.0" y2="768.8" stroke="#5a5a5a" stroke-width="1"/><line x1="791" x2="1325.4" y1="768.8" y2="768.8" stroke="#4e4e4e" stroke-width="1"/><line x1="829.2" x2="829.2" y1="768.8" y2="773.3" stroke="#4e4e4e" stroke-width="1"/><line x1="905.5" x2="905.5" y1="768.8" y2="773.3" stroke="#4e4e4e" stroke-width="1"/><line x1="981.9" x2="981.9" y1="768.8" y2="773.3" stroke="#4e4e4e" stroke-width="1"/><line x1="1058.2" x2="1058.2" y1="768.8" y2="773.3" stroke="#4e4e4e" stroke-width="1"/><line x1="1134.5" x2="1134.5" y1="768.8" y2="773.3" stroke="#4e4e4e" stroke-width="1"/><line x1="1210.9" x2="1210.9" y1="768.8" y2="773.3" stroke="#4e4e4e" stroke-width="1"/><line x1="1287.2" x2="1287.2" y1="768.8" y2="773.3" stroke="#4e4e4e" stroke-width="1"/><polyline points="791.0,703.9 829.2,698.9 867.3,693.9 905.5,689.0 943.7,684.0 981.9,679.0 1020.0,674.0 1058.2,669.0 1096.4,664.0 1134.5,659.0 1172.7,654.0 1210.9,649.1 1249.1,644.1 1287.2,639.1 1325.4,634.1" fill="none" stroke="#ececec" stroke-width="1.0" stroke-linejoin="round" stroke-opacity="1"/><polyline points="791.0,736.9 829.2,706.8 867.3,731.6 905.5,734.4 943.7,681.9 981.9,657.8 1020.0,664.2 1058.2,688.7 1096.4,677.7 1134.5,651.5 1172.7,629.5 1210.9,617.8 1249.1,615.7 1287.2,621.3" fill="none" stroke="#f01010" stroke-width="1.1" stroke-linejoin="round" stroke-opacity="1" stroke-dasharray="4,1,1.5,1"/><polyline points="791.0,738.7 829.2,690.8 867.3,726.3 905.5,731.6 943.7,673.1" fill="none" stroke="#1e7cf0" stroke-width="1.6" stroke-linejoin="round" stroke-opacity="1" stroke-dasharray="4,2"/><polyline points="791.0,738.7 829.2,699.7 867.3,729.8 905.5,733.3 943.7,678.4" fill="none" stroke="#f01010" stroke-width="1.8" stroke-linejoin="round" stroke-opacity="1" stroke-dasharray="5,2"/><polyline points="791.0,735.1 829.2,684.8 867.3,723.8 905.5,730.2 943.7,666.7 981.9,634.1 1020.0,661.4 1058.2,713.1 1096.4,661.4 1134.5,591.5" fill="none" stroke="#1e82ff" stroke-width="2.45" stroke-linejoin="round" stroke-opacity="1"/><polyline points="791.0,733.7 829.2,695.4 867.3,730.2 905.5,731.6 943.7,676.6 981.9,648.3 1020.0,666.0 1058.2,694.4 1096.4,669.5 1134.5,637.6 1172.7,602.2 1210.9,588.0 1249.1,580.9 1287.2,580.9 1325.4,584.5" fill="none" stroke="#ff0a0a" stroke-width="2.75" stroke-linejoin="round" stroke-opacity="1"/><text x="778.8" y="417.6" font-size="8.3" fill="#e4e4e4" text-anchor="end">19</text><text x="778.8" y="453.1" font-size="8.3" fill="#e4e4e4" text-anchor="end">18</text><text x="778.8" y="488.5" font-size="8.3" fill="#e4e4e4" text-anchor="end">17</text><text x="778.8" y="523.9" font-size="8.3" fill="#e4e4e4" text-anchor="end">16</text><text x="778.8" y="559.4" font-size="8.3" fill="#e4e4e4" text-anchor="end">15</text><text x="778.8" y="594.8" font-size="8.3" fill="#e4e4e4" text-anchor="end">14</text><text x="778.8" y="630.3" font-size="8.3" fill="#e4e4e4" text-anchor="end">13</text><text x="778.8" y="665.7" font-size="8.3" fill="#e4e4e4" text-anchor="end">12</text><text x="778.8" y="701.2" font-size="8.3" fill="#e4e4e4" text-anchor="end">11</text><text x="778.8" y="736.6" font-size="8.3" fill="#e4e4e4" text-anchor="end">10</text><text x="778.8" y="772.1" font-size="8.3" fill="#e4e4e4" text-anchor="end">9</text><text transform="translate(766.5,591) rotate(-90)" font-size="8.4" fill="#e4e4e4" text-anchor="middle">°C</text><text x="829.0" y="784" font-size="8.3" fill="#e4e4e4" text-anchor="middle">Fri 22</text><text x="905.3" y="784" font-size="8.3" fill="#e4e4e4" text-anchor="middle">Sun 24</text><text x="981.7" y="784" font-size="8.3" fill="#e4e4e4" text-anchor="middle">Tue 26</text><text x="1058.0" y="784" font-size="8.3" fill="#e4e4e4" text-anchor="middle">Thu 28</text><text x="1134.3" y="784" font-size="8.3" fill="#e4e4e4" text-anchor="middle">Sat 30</text><text x="1210.7" y="784" font-size="8.3" fill="#e4e4e4" text-anchor="middle">Mon 1</text><text x="1287.0" y="784" font-size="8.3" fill="#e4e4e4" text-anchor="middle">Wed 3</text><rect x="771" y="789.1" width="539.5" height="25.2" rx="2" fill="#2b2b2d" stroke="#111112" stroke-width="1"/><rect x="775.5" y="793.6" width="9" height="7.2" fill="#dedede"/><text x="787.6" y="800.0" font-size="8.3" fill="#e6e6e6">10-90%</text><rect x="824.5" y="793.6" width="9" height="7.2" fill="#dedede"/><text x="836" y="800.0" font-size="8.3" fill="#e6e6e6">25-75%</text><line x1="874.3" x2="883.3" y1="797.5" y2="797.5" stroke="#eee" stroke-width="1"/><text x="886.4" y="800.0" font-size="8.3" fill="#e6e6e6">Normal</text><line x1="921" x2="930" y1="797.2" y2="797.2" stroke="#1e82ff" stroke-width="1.4" stroke-dasharray="4,1.5,1.5,1.5"/><text x="933.2" y="800.0" font-size="8.3" fill="#e6e6e6">EC18 Op 20 May</text><line x1="1005.8" x2="1014.8" y1="797.2" y2="797.2" stroke="#f01010" stroke-width="1" stroke-dasharray="2.5,1"/><text x="1017.8" y="800.0" font-size="8.3" fill="#e6e6e6">EC12 Ens Mean 20 May</text><line x1="1117" x2="1126" y1="797.2" y2="797.2" stroke="#f01010" stroke-width="1.8" stroke-dasharray="4.5,1.5,1.5,1.5"/><text x="1129" y="800.0" font-size="8.3" fill="#e6e6e6">EC18 Ens Mean 20 May</text><line x1="1228.4" x2="1237.4" y1="797.2" y2="797.2" stroke="#1e82ff" stroke-width="2.6"/><text x="1240.5" y="800.0" font-size="8.3" fill="#e6e6e6">EC00 Op 21 May</text><line x1="775.5" x2="784.5" y1="807.4" y2="807.4" stroke="#ff0a0a" stroke-width="2.8"/><text x="787.6" y="810.2" font-size="8.3" fill="#e6e6e6">EC00 Ens Mean 21 May</text><rect x="1379.5" y="412.7" width="516.8" height="355.00000000000006" fill="#222223"/><polygon points="1379.5,707.2 1416.4,494.6 1453.3,447.7 1490.2,455.2 1527.2,567.8 1564.1,548.6 1601.0,461.7 1637.9,483.6 1674.8,519.7 1711.7,554.7 1748.6,557.3 1785.6,519.7 1822.5,471.4 1859.4,444.2 1896.3,456.5 1896.3,694.9 1859.4,688.8 1822.5,697.6 1785.6,708.5 1748.6,711.6 1711.7,719.9 1674.8,715.1 1637.9,677.4 1601.0,686.6 1564.1,707.2 1527.2,680.9 1490.2,563.9 1453.3,542.0 1416.4,561.7 1379.5,711.5" fill="#6d6d6b"/><polygon points="1379.5,707.9 1416.4,510.0 1453.3,468.3 1490.2,490.3 1527.2,602.0 1564.1,595.4 1601.0,525.4 1637.9,533.2 1674.8,573.5 1711.7,618.7 1748.6,615.1 1785.6,594.1 1822.5,542.0 1859.4,517.5 1896.3,510.8 1896.3,664.2 1859.4,654.6 1822.5,655.9 1785.6,686.6 1748.6,689.7 1711.7,693.2 1674.8,688.8 1637.9,640.6 1601.0,651.1 1564.1,682.2 1527.2,657.6 1490.2,541.6 1453.3,519.7 1416.4,549.4 1379.5,709.7" fill="#9c9c9a"/><line x1="1379.5" x2="1896.3" y1="414.0" y2="414.0" stroke="rgba(255,255,255,.085)" stroke-width="1"/><line x1="1379.5" x2="1896.3" y1="449.4" y2="449.4" stroke="rgba(255,255,255,.085)" stroke-width="1"/><line x1="1379.5" x2="1896.3" y1="484.7" y2="484.7" stroke="rgba(255,255,255,.085)" stroke-width="1"/><line x1="1379.5" x2="1896.3" y1="520.1" y2="520.1" stroke="rgba(255,255,255,.085)" stroke-width="1"/><line x1="1379.5" x2="1896.3" y1="555.5" y2="555.5" stroke="rgba(255,255,255,.085)" stroke-width="1"/><line x1="1379.5" x2="1896.3" y1="590.9" y2="590.9" stroke="rgba(255,255,255,.085)" stroke-width="1"/><line x1="1379.5" x2="1896.3" y1="626.2" y2="626.2" stroke="rgba(255,255,255,.085)" stroke-width="1"/><line x1="1379.5" x2="1896.3" y1="661.6" y2="661.6" stroke="rgba(255,255,255,.085)" stroke-width="1"/><line x1="1379.5" x2="1896.3" y1="697.0" y2="697.0" stroke="rgba(255,255,255,.085)" stroke-width="1"/><line x1="1379.5" x2="1896.3" y1="732.3" y2="732.3" stroke="rgba(255,255,255,.085)" stroke-width="1"/><line x1="1379.5" x2="1896.3" y1="767.7" y2="767.7" stroke="rgba(255,255,255,.085)" stroke-width="1"/><line x1="1379.5" x2="1379.5" y1="414" y2="767.7" stroke="rgba(255,255,255,.10)" stroke-width="1" stroke-dasharray="2.5,1.5"/><line x1="1416.4" x2="1416.4" y1="414" y2="767.7" stroke="rgba(255,255,255,.10)" stroke-width="1"/><line x1="1453.3" x2="1453.3" y1="414" y2="767.7" stroke="rgba(255,255,255,.10)" stroke-width="1" stroke-dasharray="2.5,1.5"/><line x1="1490.2" x2="1490.2" y1="414" y2="767.7" stroke="rgba(255,255,255,.10)" stroke-width="1"/><line x1="1527.2" x2="1527.2" y1="414" y2="767.7" stroke="rgba(255,255,255,.10)" stroke-width="1" stroke-dasharray="2.5,1.5"/><line x1="1564.1" x2="1564.1" y1="414" y2="767.7" stroke="rgba(255,255,255,.10)" stroke-width="1"/><line x1="1601.0" x2="1601.0" y1="414" y2="767.7" stroke="rgba(255,255,255,.10)" stroke-width="1" stroke-dasharray="2.5,1.5"/><line x1="1637.9" x2="1637.9" y1="414" y2="767.7" stroke="rgba(255,255,255,.10)" stroke-width="1"/><line x1="1674.8" x2="1674.8" y1="414" y2="767.7" stroke="rgba(255,255,255,.10)" stroke-width="1" stroke-dasharray="2.5,1.5"/><line x1="1711.7" x2="1711.7" y1="414" y2="767.7" stroke="rgba(255,255,255,.10)" stroke-width="1"/><line x1="1748.6" x2="1748.6" y1="414" y2="767.7" stroke="rgba(255,255,255,.10)" stroke-width="1" stroke-dasharray="2.5,1.5"/><line x1="1785.6" x2="1785.6" y1="414" y2="767.7" stroke="rgba(255,255,255,.10)" stroke-width="1"/><line x1="1822.5" x2="1822.5" y1="414" y2="767.7" stroke="rgba(255,255,255,.10)" stroke-width="1" stroke-dasharray="2.5,1.5"/><line x1="1859.4" x2="1859.4" y1="414" y2="767.7" stroke="rgba(255,255,255,.10)" stroke-width="1"/><line x1="1896.3" x2="1896.3" y1="414" y2="767.7" stroke="rgba(255,255,255,.10)" stroke-width="1" stroke-dasharray="2.5,1.5"/><line x1="1379.5" x2="1379.5" y1="412.7" y2="767.7" stroke="#5a5a5a" stroke-width="1"/><line x1="1379.5" x2="1896.3" y1="767.7" y2="767.7" stroke="#4e4e4e" stroke-width="1"/><line x1="1416.4" x2="1416.4" y1="767.7" y2="772.2" stroke="#4e4e4e" stroke-width="1"/><line x1="1490.2" x2="1490.2" y1="767.7" y2="772.2" stroke="#4e4e4e" stroke-width="1"/><line x1="1564.1" x2="1564.1" y1="767.7" y2="772.2" stroke="#4e4e4e" stroke-width="1"/><line x1="1637.9" x2="1637.9" y1="767.7" y2="772.2" stroke="#4e4e4e" stroke-width="1"/><line x1="1711.7" x2="1711.7" y1="767.7" y2="772.2" stroke="#4e4e4e" stroke-width="1"/><line x1="1785.6" x2="1785.6" y1="767.7" y2="772.2" stroke="#4e4e4e" stroke-width="1"/><line x1="1859.4" x2="1859.4" y1="767.7" y2="772.2" stroke="#4e4e4e" stroke-width="1"/><polyline points="1379.5,599.8 1416.4,599.8 1453.3,599.8 1490.2,599.8 1527.2,599.8 1564.1,599.8 1601.0,599.8 1637.9,599.8 1674.8,599.8 1711.7,599.8 1748.6,599.8 1785.6,599.8 1822.5,599.8 1859.4,599.8 1896.3,599.8" fill="none" stroke="#ececec" stroke-width="1.0" stroke-linejoin="round" stroke-opacity="1"/><polyline points="1379.5,707.9 1416.4,536.7 1453.3,504.3 1490.2,519.7 1527.2,629.8 1564.1,641.4 1601.0,616.5 1637.9,607.3 1674.8,623.0 1711.7,628.3 1748.6,609.0 1785.6,582.3 1822.5,566.1 1859.4,571.8" fill="none" stroke="#f01010" stroke-width="1.1" stroke-linejoin="round" stroke-opacity="1" stroke-dasharray="4,1,1.5,1"/><polyline points="1379.5,704.0 1416.4,547.7 1453.3,508.4" fill="none" stroke="#1e7cf0" stroke-width="1.6" stroke-linejoin="round" stroke-opacity="1" stroke-dasharray="4,2"/><polyline points="1379.5,707.9 1416.4,540.7 1453.3,510.8 1490.2,528.9 1527.2,636.1" fill="none" stroke="#f01010" stroke-width="1.8" stroke-linejoin="round" stroke-opacity="1" stroke-dasharray="5,2"/><polyline points="1379.5,697.0 1416.4,532.8 1453.3,496.8 1490.2,490.3 1527.2,607.3 1564.1,658.9 1601.0,503.5 1637.9,584.5 1674.8,673.0 1711.7,585.8" fill="none" stroke="#1e82ff" stroke-width="2.45" stroke-linejoin="round" stroke-opacity="1"/><polyline points="1379.5,707.9 1416.4,528.9 1453.3,496.0 1490.2,516.6 1527.2,628.8 1564.1,635.1 1601.0,584.2 1637.9,583.5 1674.8,624.0 1711.7,649.5 1748.6,643.7 1785.6,630.5 1822.5,592.2 1859.4,575.4 1896.3,585.1" fill="none" stroke="#ff0a0a" stroke-width="2.75" stroke-linejoin="round" stroke-opacity="1"/><text x="1367.3" y="417.3" font-size="8.3" fill="#e4e4e4" text-anchor="end">10 000</text><text x="1367.3" y="452.7" font-size="8.3" fill="#e4e4e4" text-anchor="end">9 000</text><text x="1367.3" y="488.0" font-size="8.3" fill="#e4e4e4" text-anchor="end">8 000</text><text x="1367.3" y="523.4" font-size="8.3" fill="#e4e4e4" text-anchor="end">7 000</text><text x="1367.3" y="558.8" font-size="8.3" fill="#e4e4e4" text-anchor="end">6 000</text><text x="1367.3" y="594.1" font-size="8.3" fill="#e4e4e4" text-anchor="end">5 000</text><text x="1367.3" y="629.5" font-size="8.3" fill="#e4e4e4" text-anchor="end">4 000</text><text x="1367.3" y="664.9" font-size="8.3" fill="#e4e4e4" text-anchor="end">3 000</text><text x="1367.3" y="700.3" font-size="8.3" fill="#e4e4e4" text-anchor="end">2 000</text><text x="1367.3" y="735.6" font-size="8.3" fill="#e4e4e4" text-anchor="end">1 000</text><text x="1367.3" y="771.0" font-size="8.3" fill="#e4e4e4" text-anchor="end">0</text><text transform="translate(1339,591) rotate(-90)" font-size="8.4" fill="#e4e4e4" text-anchor="middle">MWh/h</text><text x="1416.2" y="782" font-size="8.3" fill="#e4e4e4" text-anchor="middle">Fri 22</text><text x="1490.0" y="782" font-size="8.3" fill="#e4e4e4" text-anchor="middle">Sun 24</text><text x="1563.9" y="782" font-size="8.3" fill="#e4e4e4" text-anchor="middle">Tue 26</text><text x="1637.7" y="782" font-size="8.3" fill="#e4e4e4" text-anchor="middle">Thu 28</text><text x="1711.5" y="782" font-size="8.3" fill="#e4e4e4" text-anchor="middle">Sat 30</text><text x="1785.4" y="782" font-size="8.3" fill="#e4e4e4" text-anchor="middle">Mon 1</text><text x="1859.2" y="782" font-size="8.3" fill="#e4e4e4" text-anchor="middle">Wed 3</text><rect x="1350.4" y="788.0" width="525.5" height="25.2" rx="2" fill="#2b2b2d" stroke="#111112" stroke-width="1"/><rect x="1355.4" y="792.5" width="9" height="7.2" fill="#dedede"/><text x="1367.5" y="798.9" font-size="8.3" fill="#e6e6e6">10-90</text><rect x="1396.9" y="792.5" width="9" height="7.2" fill="#dedede"/><text x="1408.7" y="798.9" font-size="8.3" fill="#e6e6e6">25-75</text><line x1="1439.7" x2="1448.7" y1="796.5" y2="796.5" stroke="#eee" stroke-width="1"/><text x="1451.4" y="798.9" font-size="8.3" fill="#e6e6e6">Normal</text><line x1="1486.8" x2="1495.8" y1="796.1" y2="796.1" stroke="#1e82ff" stroke-width="1.4" stroke-dasharray="4,1.5,1.5,1.5"/><text x="1498.5" y="798.9" font-size="8.3" fill="#e6e6e6">EC18 Op 20 May</text><line x1="1571.4" x2="1580.4" y1="796.1" y2="796.1" stroke="#f01010" stroke-width="1" stroke-dasharray="2.5,1"/><text x="1583" y="798.9" font-size="8.3" fill="#e6e6e6">EC12 Ens Mean 20 May</text><line x1="1682.3" x2="1691.3" y1="796.1" y2="796.1" stroke="#f01010" stroke-width="1.8" stroke-dasharray="4.5,1.5,1.5,1.5"/><text x="1694.4" y="798.9" font-size="8.3" fill="#e6e6e6">EC18 Ens Mean 20 May</text><line x1="1793.5" x2="1802.5" y1="796.1" y2="796.1" stroke="#1e82ff" stroke-width="2.6"/><text x="1805.3" y="798.9" font-size="8.3" fill="#e6e6e6">EC00 Op 21 May</text><line x1="1355.4" x2="1364.4" y1="806.3" y2="806.3" stroke="#ff0a0a" stroke-width="2.8"/><text x="1367.5" y="809.1" font-size="8.3" fill="#e6e6e6">EC00 Ens Mean 21 May</text></svg>
</body></html>
